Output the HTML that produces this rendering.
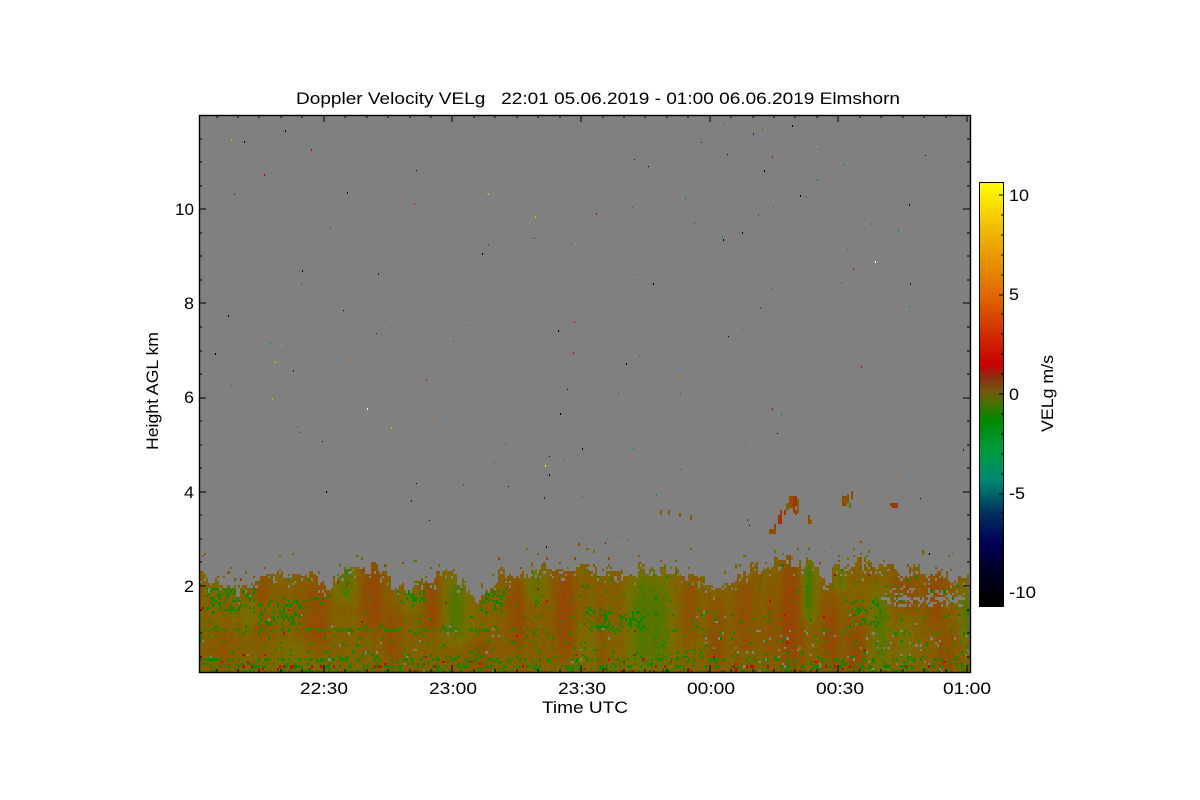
<!DOCTYPE html>
<html>
<head>
<meta charset="utf-8">
<style>
html,body{margin:0;padding:0;background:#fff;width:1200px;height:800px;overflow:hidden}
#c{position:absolute;left:199px;top:115px;width:771px;height:557px;background:#808080;image-rendering:pixelated}
#s{position:absolute;left:0;top:0}
text{font-family:"Liberation Sans",sans-serif;font-size:17px;fill:#000;white-space:pre}
</style>
</head>
<body>
<canvas id="c" width="771" height="557"></canvas>
<svg id="s" width="1200" height="800" viewBox="0 0 1200 800">
<defs>
<linearGradient id="g" x1="0" y1="0" x2="0" y2="1">
<stop offset="0" stop-color="#ffff00"/>
<stop offset="0.128" stop-color="#eeb000"/>
<stop offset="0.266" stop-color="#e06800"/>
<stop offset="0.364" stop-color="#d02800"/>
<stop offset="0.43" stop-color="#c80000"/>
<stop offset="0.46" stop-color="#8a3010"/>
<stop offset="0.49" stop-color="#755510"/>
<stop offset="0.52" stop-color="#4a7000"/>
<stop offset="0.561" stop-color="#008800"/>
<stop offset="0.627" stop-color="#009a3a"/>
<stop offset="0.70" stop-color="#008a70"/>
<stop offset="0.78" stop-color="#003060"/>
<stop offset="0.85" stop-color="#000055"/>
<stop offset="0.92" stop-color="#000020"/>
<stop offset="1" stop-color="#000000"/>
</linearGradient>
</defs>
<rect x="199.5" y="115.5" width="771" height="557" fill="none" stroke="#000" stroke-width="1.4"/>
<g id="t" stroke="#000" stroke-width="1" shape-rendering="crispEdges"></g>
<rect x="979.5" y="182.5" width="24" height="424" fill="url(#g)" stroke="#000" stroke-width="1"/>
<g id="cbt" stroke="#000" stroke-width="1" shape-rendering="crispEdges"></g>
<text x="296" y="104" textLength="604" lengthAdjust="spacingAndGlyphs">Doppler Velocity VELg   22:01 05.06.2019 - 01:00 06.06.2019 Elmshorn</text>
<text x="175" y="215" textLength="19" lengthAdjust="spacingAndGlyphs">10</text>
<text x="184" y="309" textLength="10" lengthAdjust="spacingAndGlyphs">8</text>
<text x="184" y="403" textLength="10" lengthAdjust="spacingAndGlyphs">6</text>
<text x="184" y="498" textLength="10" lengthAdjust="spacingAndGlyphs">4</text>
<text x="184" y="592" textLength="10" lengthAdjust="spacingAndGlyphs">2</text>
<text x="300" y="694" textLength="48" lengthAdjust="spacingAndGlyphs">22:30</text>
<text x="429" y="694" textLength="48" lengthAdjust="spacingAndGlyphs">23:00</text>
<text x="558" y="694" textLength="48" lengthAdjust="spacingAndGlyphs">23:30</text>
<text x="687" y="694" textLength="48" lengthAdjust="spacingAndGlyphs">00:00</text>
<text x="816" y="694" textLength="48" lengthAdjust="spacingAndGlyphs">00:30</text>
<text x="943" y="694" textLength="48" lengthAdjust="spacingAndGlyphs">01:00</text>
<text x="542" y="713" textLength="86" lengthAdjust="spacingAndGlyphs">Time UTC</text>
<text transform="translate(158,450) rotate(-90)" textLength="118" lengthAdjust="spacingAndGlyphs">Height AGL km</text>
<text x="1009" y="201" textLength="20" lengthAdjust="spacingAndGlyphs">10</text>
<text x="1009" y="300" textLength="10" lengthAdjust="spacingAndGlyphs">5</text>
<text x="1009" y="400" textLength="10" lengthAdjust="spacingAndGlyphs">0</text>
<text x="1009" y="499" textLength="16" lengthAdjust="spacingAndGlyphs">-5</text>
<text x="1009" y="598" textLength="27" lengthAdjust="spacingAndGlyphs">-10</text>
<text transform="translate(1053,432) rotate(-90)" textLength="77" lengthAdjust="spacingAndGlyphs">VELg m/s</text>
</svg>
<script>
(function(){
var NS='http://www.w3.org/2000/svg';
function line(g,a,b,c,d){var l=document.createElementNS(NS,'line');l.setAttribute('x1',a);l.setAttribute('y1',b);l.setAttribute('x2',c);l.setAttribute('y2',d);g.appendChild(l);}
var t=document.getElementById('t');
var i,x,y;
for(i=0;i<36;i++){
  x=Math.round(967-i*21.44);
  if(x<200)break;
  var mj=(i%6===0)?7:3;
  line(t,x,672,x,672-mj);line(t,x,115,x,115+mj);
}
for(i=-2;i<24;i++){
  y=Math.round(680.2-(i+1)*23.55);
  if(y<=116||y>=672)continue;
  var m=((i+1)%4===0)?7:3;
  line(t,199,y,199+m,y);line(t,970,y,970-m,y);
}
var cb=document.getElementById('cbt');
for(i=-10;i<=10;i++){
  y=Math.round(394-i*19.9);
  var n=(i%5===0)?4:2;
  line(cb,1003,y,1003-n,y);
}
var s=1234567;
function R(){s|=0;s=s+0x6D2B79F5|0;var t=Math.imul(s^s>>>15,1|s);t=t+Math.imul(t^t>>>7,61|t)^t;return((t^t>>>14)>>>0)/4294967296;}
var stops=[[-10.65,0,0,0],[-9,0,0,32],[-7.5,0,0,85],[-6,0,48,96],[-4.3,0,138,112],[-2.7,0,154,58],[-1.3,0,136,0],[-0.45,60,122,0],[0,122,108,0],[0.3,138,84,0],[0.6,150,68,5],[0.85,170,40,8],[1.5,200,0,0],[2.9,208,40,0],[5,224,104,0],[7.9,238,176,0],[10.65,255,255,0]];
function col(v){
  if(v<=stops[0][0])return[0,0,0];
  for(var i=1;i<stops.length;i++){
    if(v<=stops[i][0]){var a=stops[i-1],b=stops[i],f=(v-a[0])/(b[0]-a[0]);
      return[a[1]+(b[1]-a[1])*f,a[2]+(b[2]-a[2])*f,a[3]+(b[3]-a[3])*f];}
  }
  return[255,255,0];
}
var W=771,H=557,CW=2.15,CH=2.35;
var cols=Math.ceil(W/CW),rows=Math.ceil(H/CH);
var topPts=[[199,577],[215,583],[240,594],[260,580],[280,573],[310,572],[330,586],[345,566],[372,566],[395,587],[433,576],[455,575],[475,596],[500,573],[535,568],[570,568],[600,573],[640,568],[680,572],[710,584],[745,570],[790,558],[805,560],[825,578],[850,560],[880,568],[910,570],[940,576],[970,580]];
function envelope(px){
  for(var i=1;i<topPts.length;i++){
    if(px<=topPts[i][0]){var a=topPts[i-1],b=topPts[i],f=(px-a[0])/(b[0]-a[0]);return a[1]+(b[1]-a[1])*f;}
  }
  return 580;
}
/* plumes: x,yTop,yBottom,xsig,amp */
var pl=[
[262,575,640,8,.32],[315,580,655,12,.42],[372,565,630,12,.5],[433,575,632,9,.52],[392,610,665,8,.35],
[517,578,652,9,.5],[565,570,655,10,.55],[600,610,672,8,.25],[690,575,640,7,.3],[715,600,668,8,.35],[745,580,650,9,.3],[790,560,672,11,.65],
[830,600,672,10,.4],[855,620,672,10,.45],[905,572,610,12,.4],[935,572,628,10,.5],[770,590,660,7,.22],[945,630,672,10,.35],[220,630,672,14,.2],[480,640,672,12,.3],
[345,565,600,10,-.55],[455,575,640,14,-.6],[412,590,612,10,-.35],[535,568,600,10,-.55],[590,620,672,16,-.25],[640,568,672,11,-.6],[660,575,672,12,-.55],[808,560,620,7,-.8],[880,590,670,9,-.6],[905,620,672,8,-.3],[965,585,640,6,-.55],[255,600,625,15,-.3],[300,640,672,25,-.25],[840,565,590,7,-.45]
];
function plumeVal(px,py){
  var v=0;
  for(var i=0;i<pl.length;i++){
    var p=pl[i],dx=(px-p[0])/p[3];
    if(dx>3||dx<-3)continue;
    var my=(p[1]+p[2])/2,hy=(p[2]-p[1])/2;
    var dy=(py-my)/hy;
    if(dy>1.8||dy<-1.8)continue;
    var d2=dy*dy;
    v+=p[4]*Math.exp(-dx*dx)*Math.exp(-d2*d2*.9);
  }
  return v;
}
/* green clump zones: x0,x1,y0,y1,prob */
var gz=[[205,255,588,612,.32],[258,300,598,626,.25],[395,425,590,606,.3],[478,505,590,612,.25],[585,645,606,632,.2],[285,330,594,612,.12],[850,880,600,625,.2]];
function inGreen(px,py){
  for(var i=0;i<gz.length;i++){var z=gz[i];if(px>=z[0]&&px<=z[1]&&py>=z[2]&&py<=z[3]&&R()<z[4])return true;}
  return false;
}
/* column streak noise */
var streak=[];
for(i=0;i<cols;i++)streak[i]=(R()-.5);
var st2=[];
for(i=0;i<cols;i++){st2[i]=(streak[i]*.5+(streak[(i+1)%cols]+streak[(i+cols-1)%cols])*.25)*.16;}
/* jagged top: short runs of columns share an offset */
var colJit=[],run=0,cur=0;
for(i=0;i<cols;i++){
  if(run<=0){cur=(R()-.5)*15;run=1+Math.floor(R()*4);}
  colJit[i]=cur;run--;
}
var grid=[];
for(var r=0;r<rows;r++){
  grid[r]=[];
  var py=115+(r+.5)*CH;
  for(var c=0;c<cols;c++){
    var px=199+(c+.5)*CW;
    var top=envelope(px)+colJit[c]+(R()-.5)*2.5;
    var val=null;
    if(py>=top){
      var depth=py-top;
      var base=.15+plumeVal(px,py)*.7+st2[c];
      base+=(R()-.5)*.14;
      if(base>.72)base=.72;
      var lowF=py>650?(py-650)/22:0;
      var pg=.015+(py>610?.025:0)+lowF*.2;
      if(R()<pg)base=-.5-R()*.8;
      if(inGreen(px,py))base=-.9-R()*.5;
      if(R()<.002+lowF*.025)base=1+R()*.6;
      if(py>627&&py<631&&R()<(px<500?.35:.1))base=-.5-R()*.3;
      if(py>657&&py<660&&R()<(px<500?.4:.15))base=-.8-R()*.4;
      if(py>665&&py<668&&R()<.2)base=(R()<.25)?1.4:-1;
      val=base;
      /* gaps near the top */
      if(depth<10&&R()<.14)val=null;
      if(px>885&&px<965&&py>588&&py<606&&R()<.3)val=null;
      if(px>880&&py>597&&py<600&&R()<.5)val=null;
      if(py>610&&R()<.006)val=null;
      if(px>700&&py>630&&R()<.02)val=null;
    } else {
      var gap=top-py;
      if(gap<26&&R()<.06*Math.exp(-gap/9)+.005)val=.1+(R()-.5)*.7;
    }
    grid[r][c]=val;
  }
}
function setP(px,py,w,h,v){
  var c0=Math.floor((px-199)/CW),r0=Math.floor((py-115)/CH);
  for(var r=r0;r<r0+h;r++)for(var c=c0;c<c0+w;c++){if(grid[r]&&c>=0&&c<cols)grid[r][c]=v;}
}
/* upper patches */
setP(792,498,3,4,.75);setP(789,498,2,5,.45);setP(797,500,1,6,.15);setP(793,506,1,3,.7);
setP(778,515,2,4,.8);setP(780,512,1,3,.7);setP(770,529,3,2,.35);setP(775,526,1,2,.7);
setP(843,498,2,4,.5);setP(848,494,1,4,.4);setP(851,491,1,3,.55);setP(846,500,1,2,.2);
setP(893,505,3,2,.75);setP(890,504,1,1,.5);setP(897,503,1,2,.7);setP(808,516,1,4,.5);setP(810,521,1,2,.2);
setP(787,504,1,3,.15);setP(785,512,1,2,.7);setP(795,510,1,2,.7);
setP(660,512,1,2,.2);setP(668,512,1,2,.2);setP(680,513,1,2,.4);setP(690,515,1,2,.3);setP(850,505,1,2,-.1);
var ctx=document.getElementById('c').getContext('2d');
var img=ctx.createImageData(W,H),d=img.data;
for(var yy=0;yy<H;yy++){
  var rr=Math.floor(yy/CH);
  for(var xx=0;xx<W;xx++){
    var cc=Math.floor(xx/CW);
    var v=grid[rr]&&grid[rr][cc];
    var o=(yy*W+xx)*4,p;
    if(v===null||v===undefined){p=[128,128,128];}else{p=col(v);}
    d[o]=p[0];d[o+1]=p[1];d[o+2]=p[2];d[o+3]=255;
  }
}
ctx.putImageData(img,0,0);
/* sparse speckle above the layer */
var pal=['#000','#000018','#000040','#00304f','#009a3a','#008800','#008a70','#d02800','#e06800','#eeb000','#c80000','#555','#7a6c00','#009a3a','#e06800'];
for(i=0;i<140;i++){
  var sx=Math.floor(R()*765)+3,sy=Math.floor(R()*440)+3;
  ctx.fillStyle=pal[Math.floor(R()*pal.length)];
  ctx.fillRect(sx,sy,1,R()<.5?1:2);
}
var known=[[231,139,'#e8a000'],[311,179,'#e06800'],[311,149,'#c80000'],[302,270,'#000055'],[535,216,'#eeb000'],[545,465,'#ffff00'],[875,261,'#fff'],[367,408,'#fff'],[275,361,'#eeb000'],[272,398,'#e8a000'],[347,192,'#000'],[326,491,'#000'],[802,135,'#e06800'],[800,195,'#000'],[228,315,'#000040'],[596,213,'#c80000'],[574,321,'#d02800'],[678,374,'#e06800'],[723,239,'#000'],[742,232,'#000055']];
known.forEach(function(k){ctx.fillStyle=k[2];ctx.fillRect(k[0]-199,k[1]-115,1,2);});
})();
</script>
</body>
</html>
